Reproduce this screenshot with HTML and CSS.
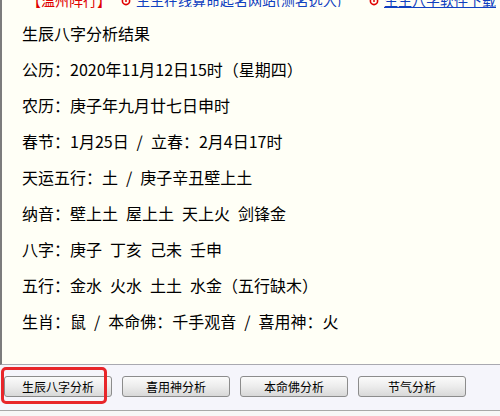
FILE: index.html
```html
<!DOCTYPE html>
<html lang="zh-CN">
<head>
<meta charset="utf-8">
<title>生辰八字分析结果</title>
<link rel="stylesheet" href="styles.css">
</head>
<body>
<div class="page">
  <div class="content">
    <div class="topstrip">
      <div class="topline">
        <span class="tag">【温州阵行】</span>
        <svg class="ico" width="10" height="10" viewBox="0 0 10 10"><circle cx="5" cy="5" r="3.6" fill="none" stroke="#e00000" stroke-width="1.6"/><circle cx="5" cy="5" r="1" fill="#e00000"/></svg>
        <a class="lnk lnk1" href="#">生生在线算命起名网站(测名选入)</a>
        <svg class="ico" width="10" height="10" viewBox="0 0 10 10"><circle cx="5" cy="5" r="3.6" fill="none" stroke="#e00000" stroke-width="1.6"/><circle cx="5" cy="5" r="1" fill="#e00000"/></svg>
        <a class="lnk" href="#">生生八字软件下载</a>
      </div>
    </div>
    <div class="lines">
      <p>生辰八字分析结果</p>
      <p>公历：2020年11月12日15时（星期四）</p>
      <p>农历：庚子年九月廿七日申时</p>
      <p>春节：1月25日 / 立春：2月4日17时</p>
      <p>天运五行：土 / 庚子辛丑壁上土</p>
      <p>纳音：壁上土 屋上土 天上火 剑锋金</p>
      <p>八字：庚子 丁亥 己未 壬申</p>
      <p>五行：金水 火水 土土 水金（五行缺木）</p>
      <p>生肖：鼠 / 本命佛：千手观音 / 喜用神：火</p>
    </div>
  </div>
  <div class="bar">
    <div class="btnwrap">
      <button class="btn">生辰八字分析</button>
      <span class="mark"></span>
    </div>
    <button class="btn">喜用神分析</button>
    <button class="btn">本命佛分析</button>
    <button class="btn">节气分析</button>
  </div>
  <div class="foot"></div>
</div>
</body>
</html>
```
FILE: styles.css
```css
html, body {
  margin: 0;
  padding: 0;
  background: #f7f7f7;
}
.page {
  width: 500px;
  height: 416px;
  overflow: hidden;
  font-family: "Noto Sans CJK SC", "Noto Sans", sans-serif;
}
.content {
  background: #fffff6;
  border-left: 2px solid #7c7c7c;
  border-bottom: 1px solid #a9a9b0;
  box-sizing: border-box;
  height: 365px;
}
.topstrip {
  height: 9px;
  overflow: hidden;
  display: flex;
  align-items: flex-end;
}
.topline {
  display: flex;
  align-items: flex-end;
  white-space: nowrap;
  font-size: 14px;
  line-height: 14px;
  padding-left: 25px;
  margin-bottom: 2px;
}
.tag {
  color: #e00000;
  width: 94px;
}
.ico {
  margin: 0 5px 1px 0;
}
.lnk {
  color: #1040c0;
  text-decoration: underline;
}
.lnk1 {
  width: 222px;
  overflow: hidden;
  margin-right: 11px;
}
.lines {
  padding: 6px 0 0 20px;
}
.lines p {
  margin: 0;
  font-size: 16px;
  line-height: 36px;
  color: #000;
  word-spacing: 4.4px;
  white-space: nowrap;
}
.bar {
  height: 46px;
  background: #f5f5fb;
  border-bottom: 1px solid #a8a8a8;
  box-sizing: border-box;
  display: flex;
  align-items: flex-start;
  gap: 10px;
  padding: 11px 0 0 4px;
}
.btnwrap {
  position: relative;
  display: flex;
}
.btn {
  width: 108px;
  height: 21px;
  padding: 0;
  margin: 0;
  border: 1px solid #8c8c8c;
  border-radius: 3px;
  background: linear-gradient(#fbfbfb, #ececec 50%, #d8d8d8);
  font-family: "Noto Sans CJK SC", sans-serif;
  font-size: 12px;
  line-height: 19px;
  color: #000;
}
.mark {
  position: absolute;
  left: -3px;
  top: -9px;
  width: 100px;
  height: 31px;
  border: 3px solid #e8262a;
  border-radius: 5px;
}
.foot {
  height: 5px;
  background: #f7f7f7;
}
```
